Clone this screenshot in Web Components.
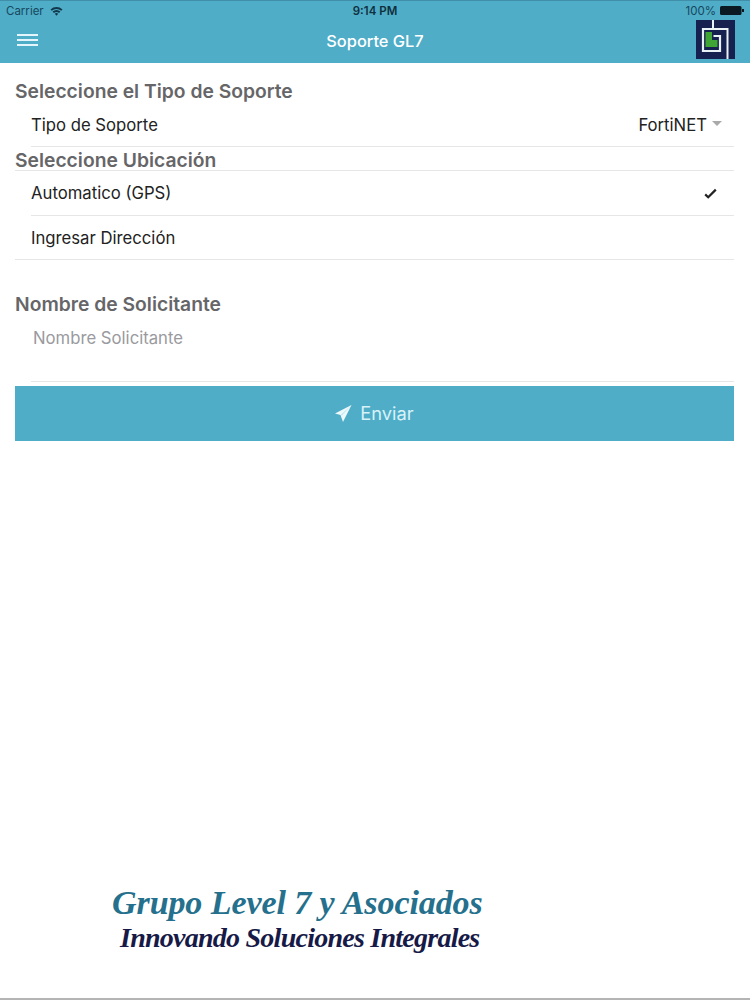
<!DOCTYPE html>
<html lang="es">
<head>
<meta charset="utf-8">
<title>Soporte GL7</title>
<style>
  html, body { margin: 0; height: 100%; background: #fff; }
  body { font-family: Inter, "Liberation Sans", sans-serif; }
  app-shell { height: 1000px; }
</style>
</head>
<body>
<app-shell>
  <nav-bar slot="top" title="Soporte GL7"></nav-bar>
  <form-title style="--top:19px;--h:20px">Seleccione el Tipo de Soporte</form-title>
  <list-row style="--h:45px;--pt:1px">Tipo de Soporte<select-value slot="end">FortiNET</select-value></list-row>
  <form-title style="--top:3px;--h:21px;--lh:20px" data-full>Seleccione Ubicación</form-title>
  <list-row style="--h:45px">Automatico (GPS)<check-mark slot="end"></check-mark></list-row>
  <list-row style="--h:44px" data-full>Ingresar Dirección</list-row>
  <form-title style="--top:34px;--h:20px;--lh:20px">Nombre de Solicitante</form-title>
  <text-field placeholder="Nombre Solicitante"></text-field>
  <send-button>Enviar</send-button>
  <brand-footer slot="bottom"></brand-footer>
</app-shell>
<script>
class AppShell extends HTMLElement {
  constructor() {
    super();
    this.attachShadow({mode: 'open'}).innerHTML = `<style>
      :host { display: flex; flex-direction: column; }
      main { flex: 1; padding: 0 16px 0 15px; display: flex; flex-direction: column; }
    </style>
    <slot name="top"></slot>
    <main><slot></slot></main>
    <slot name="bottom"></slot>`;
  }
}

class NavBar extends HTMLElement {
  constructor() {
    super();
    this.attachShadow({mode: 'open'}).innerHTML = `<style>
      :host { display: block; height: 63px; background: #4fadc7; border-top: 1px solid #3f8fa8; box-sizing: border-box; position: relative; }
      .status { height: 19px; display: flex; align-items: center; justify-content: space-between; padding: 0 6px; font-size: 11.5px; color: #16485f; }
      .status > div { flex: 1; display: flex; align-items: center; gap: 6px; }
      .clock { justify-content: center; font-weight: 600; color: #10303f; }
      .batt { justify-content: flex-end; gap: 4px !important; }
      .nav { height: 43px; display: flex; align-items: center; justify-content: center; position: relative; color: #fff; font-size: 16.4px; font-weight: 500; padding-bottom: 2px; box-sizing: border-box; }
      .menu { position: absolute; left: 17px; top: 14px; width: 21px; height: 12px; display: flex; flex-direction: column; justify-content: space-between; }
      .menu i { display: block; height: 2px; background: #e4f6fb; }
      svg { display: block; }
      .logo { position: absolute; left: 696px; top: 19px; }
    </style>
    <div class="status">
      <div>Carrier
        <svg width="13" height="10" viewBox="0 0 13 10"><path d="M0.5 3.4A9 9 0 0 1 12.5 3.4L11.2 4.8A7 7 0 0 0 1.8 4.8Z M2.6 5.6A6 6 0 0 1 10.4 5.6L9.1 7A4 4 0 0 0 3.9 7Z M4.8 7.8A2.6 2.6 0 0 1 8.2 7.8L6.5 9.7Z" fill="#12384c"/></svg>
      </div>
      <div class="clock">9:14 PM</div>
      <div class="batt">100%
        <svg width="24" height="9" viewBox="0 0 24 9"><rect x="0" y="0" width="21.5" height="9" rx="1.5" fill="#0b1a22"/><rect x="22" y="3" width="2" height="3" fill="#0b1a22"/></svg>
      </div>
    </div>
    <div class="nav">
      <div class="menu"><i></i><i></i><i></i></div>
      <span></span>
    </div>
    <svg class="logo" width="39" height="39" viewBox="0 0 39 39">
      <rect width="39" height="39" fill="#17214f"/>
      <path d="M17 0V9H31.500V39" fill="none" stroke="#e9f2f4" stroke-width="2"/>
      <path d="M17 9H7V31H24V16H17.500" fill="none" stroke="#e9f2f4" stroke-width="2.200"/>
      <path d="M9.500 12H16V20H21.500V27H9.500Z" fill="#3fa535"/>
    </svg>`;
    this.shadowRoot.querySelector('.nav span').textContent = this.getAttribute('title');
  }
}

class FormTitle extends HTMLElement {
  constructor() {
    super();
    this.attachShadow({mode: 'open'}).innerHTML = `<style>
      :host { display: block; margin-top: var(--top, 0); height: var(--h, 20px); box-sizing: border-box; line-height: var(--lh, 18px); font-size: 19.3px; font-weight: 600; color: #666668; }
      :host([data-full]) { border-bottom: 1px solid #e6e6e6; }
    </style><slot></slot>`;
  }
}

class ListRow extends HTMLElement {
  constructor() {
    super();
    this.attachShadow({mode: 'open'}).innerHTML = `<style>
      :host { display: block; font-size: 16.7px; color: #222; }
      .row { height: var(--h, 45px); box-sizing: border-box; margin-left: 16px; padding: var(--pt, 0) 0 0; display: flex; align-items: center; justify-content: space-between; border-bottom: 1px solid #e6e6e6; }
      :host([data-full]) .row { margin-left: 0; padding-left: 16px; }
    </style><div class="row"><span><slot></slot></span><slot name="end"></slot></div>`;
  }
}

class SelectValue extends HTMLElement {
  constructor() {
    super();
    this.attachShadow({mode: 'open'}).innerHTML = `<style>
      :host { display: flex; align-items: center; gap: 5px; padding-right: 12px; }
      i { width: 0; height: 0; border: 5px solid transparent; border-top: 5px solid #aaa; border-bottom: 0; margin-top: -3px; }
    </style><slot></slot><i></i>`;
  }
}

class CheckMark extends HTMLElement {
  constructor() {
    super();
    this.attachShadow({mode: 'open'}).innerHTML = `<style>
      :host { display: block; padding-right: 17px; }
      svg { display: block; }
    </style><svg width="13" height="11" viewBox="0 0 13 11"><path d="M1.2 6.4 4.2 9.2 11.800 1.600" fill="none" stroke="#222" stroke-width="2.200"/></svg>`;
  }
}

class TextField extends HTMLElement {
  constructor() {
    super();
    this.attachShadow({mode: 'open'}).innerHTML = `<style>
      :host { display: block; margin-left: 16px; height: 68px; box-sizing: border-box; border-bottom: 1px solid #e6e6e6; padding: 14px 0 0 2px; }
      input { border: 0; outline: 0; padding: 0; width: 100%; height: 20px; font: 16.7px Inter, "Liberation Sans", sans-serif; background: transparent; }
      input::placeholder { color: #9a9a9e; opacity: 1; }
    </style><input type="text">`;
    this.shadowRoot.querySelector('input').placeholder = this.getAttribute('placeholder');
  }
}

class SendButton extends HTMLElement {
  constructor() {
    super();
    this.attachShadow({mode: 'open'}).innerHTML = `<style>
      :host { display: flex; margin-top: 4px; height: 55px; box-sizing: border-box; padding-bottom: 1px; background: #4fadc7; color: #d8f2f8; font-size: 18.300px; align-items: center; justify-content: center; gap: 8px; }
      svg { display: block; }
    </style><svg width="17" height="17" viewBox="0 0 17 17"><path d="M16.500 0 0 8.500 5.500 10 8 17Z" fill="#eef9fc"/><path d="M16.500 0 5.500 10 7 10.500Z" fill="#c4e8f1"/></svg><slot></slot>`;
  }
}

class BrandFooter extends HTMLElement {
  constructor() {
    super();
    this.attachShadow({mode: 'open'}).innerHTML = `<style>
      :host { display: block; border-bottom: 2px solid #b4b4b4; height: 128px; box-sizing: border-box; padding: 12px 0 0 112px; font-family: "Liberation Serif", serif; font-style: italic; font-weight: 700; }
      div { white-space: nowrap; }
      .a { font-size: 34px; line-height: 38px; color: #25708c; letter-spacing: -.08px; }
      .b { font-size: 28px; line-height: 32px; color: #171a47; margin-left: 8px; letter-spacing: -.75px; }
    </style><div class="a">Grupo Level 7 y Asociados</div><div class="b">Innovando Soluciones Integrales</div>`;
  }
}

customElements.define('app-shell', AppShell);
customElements.define('nav-bar', NavBar);
customElements.define('form-title', FormTitle);
customElements.define('list-row', ListRow);
customElements.define('select-value', SelectValue);
customElements.define('check-mark', CheckMark);
customElements.define('text-field', TextField);
customElements.define('send-button', SendButton);
customElements.define('brand-footer', BrandFooter);
</script>
</body>
</html>
